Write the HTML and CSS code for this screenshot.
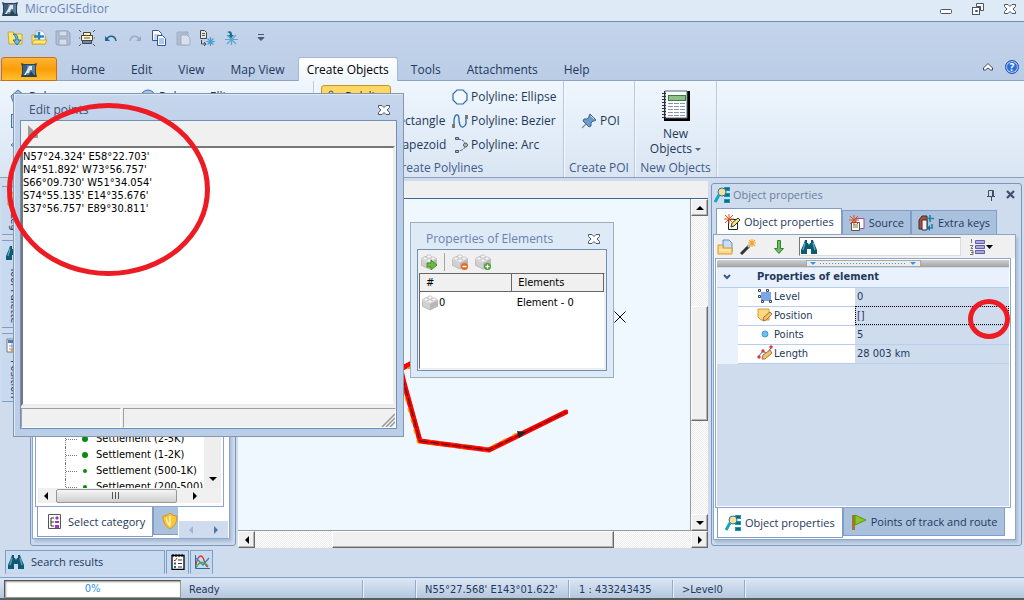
FILE: index.html
```html
<!DOCTYPE html>
<html lang="en">
<head>
<meta charset="utf-8">
<title>MicroGISEditor</title>
<link rel="stylesheet" href="styles.css">
</head>
<body>
<svg class="symbols" aria-hidden="true">
  <symbol id="logo" viewBox="0 0 16 16"><path d="M0 1l3 1 10 0 3-1-1 4 0 6 1 4H0l1-4V5z" fill="#2b4357"/><path d="M2 3h12v10H2z" fill="#5d7f9a"/><path d="M2 3h4v10H2z" fill="#3f6079"/><path d="M8 4h3v4H9l-1 3H6l-1 2H3l3-5z" fill="#dce9f0"/><path d="M10 9l3 4H8z" fill="#25435c"/></symbol>
  <symbol id="bino" viewBox="0 0 16 14"><path d="M4 0h2v3h1l1 2 1-2h1V0h2l1 3 3 7v4h-6V9H6v5H0v-4l3-7z" fill="#0d5a72"/><path d="M4 3L2 10M12 3l2 7" stroke="#5fa9bb" stroke-width="1.3"/></symbol>
  <symbol id="brick" viewBox="0 0 16 16"><path d="M0 5l6-3 10 3v6l-8 4-8-4z" fill="#d0d0d0" stroke="#a8a8a8" stroke-width=".7"/><path d="M0 5l8 4 8-4-9-3z" fill="#f2f2f2"/><path d="M8 9v6l8-4V5z" fill="#b8b8b8"/><g fill="#fafafa" stroke="#aaa" stroke-width=".6"><ellipse cx="8" cy="2.5" rx="2.2" ry="1.6"/><ellipse cx="4" cy="4.5" rx="2.2" ry="1.6"/><ellipse cx="12" cy="4.5" rx="2.2" ry="1.6"/><ellipse cx="8" cy="6.6" rx="2.2" ry="1.6"/></g></symbol>
  <symbol id="close" viewBox="0 0 12 10"><path d="M.5.5h3.500L6 2.500 8 .5h3.500v2L9 5l2.500 2.500v2H8l-2-2-2 2H.5v-2L3 5 .5 2.500z" fill="#fff" stroke="#4c5566"/></symbol>
  <symbol id="objprop" viewBox="0 0 16 16"><path d="M10 0h6v4h-6zM10 6h6v4h-6zM10 12h6v4h-6z" fill="#159ab5"/><path d="M11 2h4M11 8h4M11 14h4" stroke="#083d55"/><circle cx="8" cy="5" r="4" fill="#f5dfa0" stroke="#27758c"/><path d="M5 8l-4 7" stroke="#13a7c4" stroke-width="3"/></symbol>
  <symbol id="spark" viewBox="0 0 16 16"><path d="M5 0v10M0 5h10M1 1l8 8M9 1L1 9" stroke="#e0501c" stroke-width="1"/></symbol>
</svg>

<header class="titlebar">
  <svg class="i16"><use href="#logo"/></svg>
  <h1>MicroGISEditor</h1>
  <div class="winbtns">
    <button aria-label="Minimize"><svg width="12" height="12"><rect x=".5" y="6.500" width="11" height="4" rx="1" fill="#fff" stroke="#4c5566"/></svg></button>
    <button aria-label="Restore"><svg width="12" height="12"><path d="M4.500.5h7v7h-3v-4h-4z" fill="#fff" stroke="#4c5566"/><rect x=".5" y="4.500" width="7" height="7" fill="#fff" stroke="#4c5566"/><path d="M3.500 7.500h2v1h-2zM7.500 3.500h1" fill="none" stroke="#4c5566"/></svg></button>
    <button aria-label="Close"><svg width="12" height="10"><use href="#close"/></svg></button>
  </div>
</header>

<div class="topzone">
  <div class="quick">
    <button aria-label="Open"><svg class="i16" viewBox="0 0 16 16"><path d="M1 2h5l1 2h8v10H2z" fill="#fbe67a" stroke="#d3a721"/><path d="M6 4c4 0 5 2 5 6h3l-4 5-4-5h3c0-3-1-4-3-6z" fill="#66b9e8" stroke="#17638f" stroke-width=".8"/></svg></button>
    <button aria-label="New map"><svg class="i16" viewBox="0 0 16 16"><path d="M1 14V5h4l1 2h9l-1 7z" fill="#fbe67a" stroke="#d3a721"/><path d="M5 1h6l3 3v8H5z" fill="#fff" stroke="#a8a8a8" stroke-width=".8"/><path d="M8 2v9M3 6.500h10" stroke="#2386c3" stroke-width="2.500"/><path d="M1 14l2-4h13l-2 4z" fill="#ffe987" stroke="#d3a721"/></svg></button>
    <button aria-label="Save" disabled><svg class="i16" viewBox="0 0 16 16"><path d="M1 1h12l2 2v12H2l-1-1z" fill="#b2bfd2" stroke="#98a6bb"/><path d="M4 1h8v5H4zM4 9h8v6H4z" fill="#d5ddea" stroke="#98a6bb"/></svg></button>
    <button aria-label="Map snapshot"><svg class="i16" viewBox="0 0 16 16"><path d="M4.500 2.500h7v4h-7z" fill="#fff3a8" stroke="#444"/><path d="M2.500 5.500h11v5h-11z" fill="#fff6c0" stroke="#444"/><path d="M5 8h6" stroke="#555"/><path d="M3.500 10.500h9v3h-9z" fill="#6889b5" stroke="#444"/><path d="M0 0l2 2M16 0l-2 2M0 16l2-2M16 16l-2-2M0 8h1M15 8h1" stroke="#555"/></svg></button>
    <button aria-label="Undo"><svg class="i16" viewBox="0 0 16 16"><path d="M4 9c2-4 8-4 9 2" fill="none" stroke="#1d6690" stroke-width="1.500"/><path d="M2 6v5h5z" fill="#1d6690"/></svg></button>
    <button aria-label="Redo" disabled><svg class="i16" viewBox="0 0 16 16"><path d="M12 9C10 5 4 5 3 11" fill="none" stroke="#9aabc2" stroke-width="1.500"/><path d="M14 6v5H9z" fill="#9aabc2"/></svg></button>
    <button aria-label="Copy"><svg class="i16" viewBox="0 0 16 16"><path d="M1.500.5h6l3 3v7h-9z" fill="#fff" stroke="#35569a"/><path d="M3 5h5M3 7h5M3 9h5" stroke="#8fb3e5"/><path d="M6.500 5.500h5l3 3v7h-8z" fill="#fff" stroke="#35569a"/><path d="M8 9h5M8 11h5M8 13h5" stroke="#5f92dc"/></svg></button>
    <button aria-label="Paste" disabled><svg class="i16" viewBox="0 0 16 16"><path d="M2 2h11v13H2z" fill="#aebbd0" stroke="#9fafc5"/><path d="M6 5h6l3 3v7H6z" fill="#d8e0ec" stroke="#9fafc5"/></svg></button>
    <button aria-label="Import points"><svg class="i16" viewBox="0 0 16 16"><path d="M1.500.5h4l2 2v6h-6z" fill="#e8e8e8" stroke="#444"/><path d="M3 3.500h3M3 5.500h3" stroke="#555"/><path d="M2.500 10v4h4M5 12l2 2-2 2" fill="none" stroke="#444"/><path d="M11.500 7v9M7 11.500h9M8.500 8.500l6 6M14.500 8.500l-6 6" stroke="#4d9fce" stroke-width="1.200"/></svg></button>
    <button aria-label="Center"><svg class="i16" viewBox="0 0 16 16"><path d="M8.500 7v8M2 9.500h13M4 5l9 9M13 5l-9 9" stroke="#5fa5cc" stroke-width="1.200"/><path d="M4 2c4-2 5 0 5 3h2L8 8 5 5h2c0-2-1-2-3-3z" fill="#176f8b"/></svg></button>
    <button aria-label="Customize toolbar"><svg class="i16" viewBox="0 0 16 16"><path d="M5 4.500h6M5 7.500h6l-3 3z" fill="#50586a" stroke="#50586a"/></svg></button>
  </div>
  <nav class="tabs">
    <button class="app" aria-label="Application menu"><svg class="i16"><use href="#logo"/></svg></button>
    <button>Home</button><button>Edit</button><button>View</button><button>Map View</button><button class="on">Create Objects</button><button>Tools</button><button>Attachments</button><button>Help</button>
    <span class="fill"></span>
    <button class="ic" aria-label="Collapse ribbon"><svg width="10" height="8"><path d="M.5 5L5 .5 9.500 5v2h-2L5 5 2.500 7h-2z" fill="#fff" stroke="#3e4655"/></svg></button>
    <button class="ic help" aria-label="Help contents">?</button>
  </nav>
</div>

<section class="ribbon">
  <div class="group polygons">
    <div class="cells">
      <button><svg class="i16" viewBox="0 0 16 16"><path d="M8 1l7 6-3 8H4L1 7z" fill="#9fc4e6" stroke="#3d74ad"/></svg>Polygon</button>
      <button><svg class="i16" viewBox="0 0 16 16"><circle cx="8" cy="8" r="7" fill="#9fc4e6" stroke="#3d74ad"/></svg>Polygon: Ellipse</button>
      <button aria-label="Polygon: Rectangle"><svg class="i16" viewBox="0 0 16 16"><rect x="1.500" y="1.500" width="13" height="13" fill="#c9def2" stroke="#3d74ad"/></svg></button>
      <span></span>
      <button aria-label="Polygon: Rhombus"><svg class="i16" viewBox="0 0 16 16"><path d="M1 8l7-5 7 5-7 5z" fill="#c9def2" stroke="#3d74ad"/></svg></button>
    </div>
  </div>
  <div class="group lines">
    <div class="cells">
      <button class="pressed"><svg class="i16" viewBox="0 0 16 16"><path d="M4 5l4 8 7-5" fill="none" stroke="#3d74ad"/><circle cx="5" cy="4" r="2" fill="#ccc" stroke="#555"/></svg>Polyline</button>
      <button><svg class="i16" viewBox="0 0 16 16"><path d="M5 1h6l4 4v6l-4 4H5l-4-4V5z" fill="#f1f8ff" stroke="#2f68ac" stroke-width="1.200"/></svg>Polyline: Ellipse</button>
      <button class="plain">Polyline: Rectangle</button>
      <button><svg class="i16" viewBox="0 0 16 16"><path d="M2 13V9C2 0 7 0 7 6s3 12 7 5V4" fill="none" stroke="#2f68ac" stroke-width="1.300"/><path d="M0 11h3v4H0zM13 2h3v4h-3z" fill="#777"/></svg>Polyline: Bezier</button>
      <button class="plain">Polyline: Trapezoid</button>
      <button><svg class="i16" viewBox="0 0 16 16"><path d="M6 2c10 1 10 11 0 12" fill="none" stroke="#2f68ac" stroke-dasharray="3 1"/><g fill="#bbb" stroke="#555"><path d="M3.500.5h3v2h-3zM3.500 13.500h3v2h-3z"/><circle cx="13.500" cy="8" r="2"/></g></svg>Polyline: Arc</button>
    </div>
    <h2>Create Polylines</h2>
  </div>
  <div class="group poi">
    <div class="cells"><button><svg class="i16" viewBox="0 0 16 16"><path d="M6 10l-5 5" stroke="#8b98a5" stroke-width="1.500"/><path d="M9 1l6 6-2 1-1 0-2 2 0 3-2 1-6-6 1-2h3l2-2V3z" fill="#6b9cc9" stroke="#3b648c"/><path d="M10 3l3 3" stroke="#cfe5f7"/></svg>POI</button></div>
    <h2>Create POI</h2>
  </div>
  <div class="group objects">
    <button class="big"><svg width="30" height="32" viewBox="0 0 30 32"><path d="M3 1h26v30H3z" fill="#000"/><path d="M4 1h22v27H4z" fill="#fff" stroke="#567"/><path d="M1 3.500h4M1 6.500h4M1 9.500h4M1 12.500h4M1 15.500h4M1 18.500h4M1 21.500h4M1 24.500h4M1 27.500h4" stroke="#333"/><rect x="7.500" y="5.500" width="17" height="5" fill="#8fc08c" stroke="#35803b"/><path d="M7 13.500h17M7 16.500h17M7 19.500h17M7 22.500h17M7 25.500h17" stroke="#8594b0" stroke-dasharray="5 1"/></svg>
      <span>New<br>Objects <i class="caret"></i></span></button>
    <h2>New Objects</h2>
  </div>
</section>

<main class="work">
  <aside class="dock">
    <button class="d1"><svg class="i16" viewBox="0 0 16 16"><path d="M2 2h12v12H2z" fill="#ffe45c" stroke="#b89318"/></svg>Leg</button>
    <button class="d2"><svg class="i16"><use href="#bino"/></svg>Tool Palette</button>
    <button class="d3"><svg class="i16" viewBox="0 0 16 16"><path d="M1 1h13v13H1z" fill="#fff" stroke="#777"/><path d="M2 2h12v3H2z" fill="#487dc1"/><path d="M3 8h9M3 11h9M6 5v9" stroke="#8595a8"/><path d="M4 13l5-3v6z" fill="#e89b3d"/></svg>Position</button>
  </aside>

  <section class="panel left">
    <div class="sheet">
      <div class="treebox">
        <ul class="tree">
          <li><b class="dot"></b>Settlement (2-5K)</li>
          <li><b class="dot"></b>Settlement (1-2K)</li>
          <li><b class="dot s"></b>Settlement (500-1K)</li>
          <li><b class="dot s"></b>Settlement (200-500)</li>
        </ul>
        <div class="vsoft"><i class="tri down"></i></div>
        <div class="hsoft"><i class="tri lft"></i><b class="thumb"></b><i class="tri rgt"></i></div>
      </div>
      <div class="btabs">
        <button class="on"><svg width="14" height="16" viewBox="0 0 14 16"><path d="M.5.5h12v14H.5z" fill="#fff" stroke="#555"/><path d="M6 4H3v8h3M3 8h3" fill="none" stroke="#333"/><path d="M9 2l2 2-2 2-2-2zM7 7h4v2H7zM7 11h4v3H7z" fill="#a235b8"/></svg>Select category</button>
        <button class="shield" aria-label="Protection"><svg class="i16" viewBox="0 0 16 16"><path d="M1 3c3 0 5-1 7-3 2 2 4 3 7 3 0 6-2 10-7 13C3 13 1 9 1 3z" fill="#f6c63b" stroke="#d6941d"/><path d="M8 3v10M4 5c1 4 2 6 4 8" stroke="#fff2b0" stroke-width="1.500" fill="none"/></svg></button>
        <span class="arrows"><i class="tri lft"></i><i class="tri rgt"></i></span>
      </div>
    </div>
  </section>

  <section class="map">
    <div class="ruler"></div>
    <div class="canvas">
      <svg class="route" width="330" height="260" viewBox="238 200 330 260"><g fill="none" stroke-linejoin="round" stroke-linecap="round"><path d="M380 380L412 363M395 345l9 38 16 58 69 9 77-38" stroke="#f00" stroke-width="5"/><path d="M380 382L412 365M394 345l9 38 16 58 69 9 33-17" stroke="#f49a00" stroke-width="5" stroke-dasharray="2 9"/><path d="M380 380L412 363M395 345l9 38 16 58 69 9 77-38" stroke="#f00" stroke-width="4"/><path d="M395 345l9 38 16 58 69 9 77-38" stroke="#222" stroke-dasharray="8 3"/></g><path d="M517 431l9 1-7 6z" fill="#222"/></svg>
      <svg class="cross" width="12" height="12"><path d="M.5.5l11 11M11.500.5l-11 11" stroke="#000"/></svg>
    </div>
    <div class="vbar"><button aria-label="Scroll up"><i class="tri up"></i></button><b></b><button aria-label="Scroll down"><i class="tri down"></i></button></div>
    <div class="hbar"><button aria-label="Scroll left"><i class="tri lft"></i></button><b></b><button aria-label="Scroll right"><i class="tri rgt"></i></button></div>
  </section>

  <section class="panel right">
    <div class="phead"><svg class="i16"><use href="#objprop"/></svg><span>Object properties</span>
      <button aria-label="Pin"><svg width="8" height="11"><path d="M1.500 6V.5h5V6M0 6.500h8M4.500 7v4M5.500 1v5" fill="none" stroke="#3e4e6b"/></svg></button>
      <button aria-label="Close panel"><svg width="10" height="10"><path d="M1 1l7 7M8 1L1 8" stroke="#3e4e6b" stroke-width="2.200"/></svg></button></div>
    <div class="ttabs">
      <button class="on"><svg class="i16" viewBox="0 0 16 16"><path d="M4.500 5.500h9v10h-9z" fill="#fff" stroke="#222"/><path d="M7 13l1-4 6-5 2 2-6 6z" fill="#ffe36a" stroke="#333"/><use href="#spark"/></svg>Object properties</button>
      <button><svg class="i16" viewBox="0 0 16 16"><path d="M7 3.500h8v10H7z" fill="#fff" stroke="#a34ba3"/><path d="M2.500 7.500h8v8h-8z" fill="#fffbe0" stroke="#555"/><path d="M4 10h5M4 12h5" stroke="#777"/><use href="#spark"/></svg>Source</button>
      <button><svg class="i16" viewBox="0 0 16 16"><path d="M1 5l3-4h5v13H1z" fill="#b64a42" stroke="#333"/><path d="M4 5h5v10H4z" fill="#f2f2f2" stroke="#333"/><path d="M12 0v7M9 3.500h7M14 9v4h-4" stroke="#1b89a5" stroke-width="1.600" fill="none"/><path d="M9 13l3-3v6z" fill="#1b6ca5"/></svg>Extra keys</button>
    </div>
    <div class="sheet">
      <div class="tools">
        <button aria-label="Open folder"><svg class="i16" viewBox="0 0 16 16"><path d="M6 1h6l3 3v9H6z" fill="#c9ddf5" stroke="#5f8ec9"/><path d="M1 6h5v3h9v6H1z" fill="#fcd98a" stroke="#d7982f"/><path d="M2 11h12" stroke="#fff3cf"/></svg></button>
        <button aria-label="Wizard"><svg class="i16" viewBox="0 0 16 16"><path d="M1 15l8-8" stroke="#333" stroke-width="3"/><path d="M8 8l2-2" stroke="#bbb" stroke-width="3"/><path d="M12 0v8M8 4h8M9 1l6 6M15 1L9 7" stroke="#f0a92c" stroke-width="1.200"/></svg></button>
        <i class="sep"></i>
        <button class="nar" aria-label="Move down"><svg width="10" height="14"><path d="M3.500.5h3v8h3L5 13.500.5 8.500h3z" fill="#6bbd60" stroke="#378332"/></svg></button>
        <i class="sep"></i>
        <label class="find"><svg class="i16"><use href="#bino"/></svg><input type="text" aria-label="Search properties"></label>
        <i class="sep"></i>
        <button class="sort" aria-label="Sort"><svg width="24" height="16"><g fill="#aaa8de" stroke="#625fa9"><path d="M5.500 1.500h9v3h-9zM5.500 6.500h9v3h-9zM5.500 11.500h9v3h-9z"/></g><path d="M1.500 0v4M0 6.500h3l-2 3h2M0 11.500h3v4H0M1 13.500h2" fill="none" stroke="#555" stroke-width=".8"/><path d="M16 6h7l-3.500 4z" fill="#000"/></svg></button>
      </div>
      <div class="gridframe">
        <div class="split"><span><i class="tri down"></i><i class="dots"></i><i class="tri down"></i></span></div>
        <table class="props">
          <colgroup><col class="k0"><col class="k1"><col></colgroup>
          <thead><tr><th><svg width="8" height="6"><path d="M1 1l3 3 3-3" fill="none" stroke="#3d5a8a" stroke-width="2"/></svg></th><th colspan="2">Properties of element</th></tr></thead>
          <tbody>
          <tr><td></td><th><svg class="i16" viewBox="0 0 16 16"><path d="M4 4h10v9H4z" fill="#7aa5e8"/><g fill="#fff" stroke="#345"><path d="M1.500 1.500h2v2h-2zM9.500 1.500h2v2h-2zM1.500 7.500h2v2h-2zM4.500 12.500h2v2h-2zM12.500 12.500h2v2h-2z"/></g></svg>Level</th><td>0</td></tr>
          <tr class="sel"><td></td><th><svg class="i16" viewBox="0 0 16 16"><path d="M1 2h11v11H4l-3-3z" fill="#ffd77d" stroke="#d89b3a"/><path d="M6 14l1-4 6-5 2 2-6 6z" fill="#f8c56c" stroke="#a8703a"/></svg>Position</th><td>[]<i class="ring"></i></td></tr>
          <tr><td></td><th><svg class="i16" viewBox="0 0 16 16"><circle cx="8" cy="8" r="3" fill="#6cc0ee" stroke="#3c98cf"/></svg>Points</th><td>5</td></tr>
          <tr><td></td><th><svg class="i16" viewBox="0 0 16 16"><path d="M1 12l5-6 4 3 5-8" fill="none" stroke="#3e62c5"/><g fill="#e33"><circle cx="2" cy="12" r="1.700"/><circle cx="6" cy="6" r="1.700"/><circle cx="14" cy="2" r="1.700"/></g><path d="M5 14l1-4 7-5 2 3-7 6z" fill="#f5c36c" stroke="#a8703a"/></svg>Length</th><td>28 003 km</td></tr>
          </tbody>
        </table>
      </div>
      <div class="btabs">
        <button class="on"><svg class="i16"><use href="#objprop"/></svg>Object properties</button>
        <button><svg class="i16" viewBox="0 0 16 16"><path d="M2.500 1v15" stroke="#a87431" stroke-width="3"/><path d="M4 1l11 5-11 5z" fill="#8cc820" stroke="#5c9312"/></svg>Points of track and route</button>
      </div>
    </div>
  </section>
</main>

<div class="bottomdock">
  <button class="sr"><svg class="i16" viewBox="0 0 16 16"><use href="#bino"/></svg>Search results</button>
  <button class="sq" aria-label="Task list"><svg class="i16" viewBox="0 0 16 16"><path d="M2 1.500h12v14H2z" fill="#fff" stroke="#000" stroke-width="1.300"/><path d="M3 0v3M6 0v3M9 0v3M12 0v3" stroke="#000"/><path d="M4 6l1 1 2-3" stroke="#e22" fill="none"/><path d="M4 8.500h2v2H4zM4 12h2v2H4z" fill="#178"/><path d="M8 6h4M8 9.500h4M8 13h4" stroke="#333"/></svg></button>
  <button class="sq" aria-label="Chart"><svg class="i16" viewBox="0 0 16 16"><path d="M1.500 1v13.500H16" fill="none" stroke="#369"/><path d="M2 11C4 0 8 0 10 6s2 6 4 7" fill="none" stroke="#d33" stroke-width="1.300"/><path d="M2 4l7 7 6-7" fill="none" stroke="#38b" stroke-width="1.300"/><path d="M2 14c3-7 8-7 12-2" fill="none" stroke="#4a4" stroke-width="1.300"/></svg></button>
</div>

<footer class="status">
  <div class="progress" role="progressbar" aria-valuenow="0">0%</div>
  <span class="c1">Ready</span><span class="c0"></span><span class="c2">N55°27.568' E143°01.622'</span><span class="c3">1 : 433243435</span><span class="c4">&gt;Level0</span>
</footer>

<section class="dialog elements">
  <header><h2>Properties of Elements</h2><button aria-label="Close elements"><svg width="12" height="10"><use href="#close"/></svg></button></header>
  <div class="body">
    <div class="bar">
      <button aria-label="Go to element"><svg class="i16" viewBox="0 0 16 16"><use href="#brick"/><path d="M6 9h4V6l6 5-6 5v-3H6z" fill="#6cbc3c" stroke="#33801c" stroke-width=".8"/></svg></button>
      <i class="sep"></i>
      <button aria-label="Remove element"><svg class="i16" viewBox="0 0 16 16"><use href="#brick"/><circle cx="12.500" cy="12.500" r="3.500" fill="#e8691d"/><path d="M10.500 12.500h4" stroke="#fff" stroke-width="1.500"/></svg></button>
      <button aria-label="Add element"><svg class="i16" viewBox="0 0 16 16"><use href="#brick"/><circle cx="12.500" cy="12.500" r="3.500" fill="#4b9c34"/><path d="M10.500 12.500h4M12.500 10.500v4" stroke="#fff" stroke-width="1.300"/></svg></button>
    </div>
    <div class="list"><table>
      <thead><tr><th>#</th><th>Elements</th></tr></thead>
      <tbody><tr><td><svg class="i16"><use href="#brick"/></svg>0</td><td>Element - 0</td></tr></tbody>
    </table></div>
  </div>
</section>

<section class="dialog points">
  <header><h2>Edit points</h2><button aria-label="Close points"><svg width="12" height="10"><use href="#close"/></svg></button></header>
  <div class="body">
    <div class="bar"><svg width="12" height="13"><path d="M1 0l10 10v3H1z" fill="#9c9c9c"/></svg></div>
    <textarea aria-label="Points" spellcheck="false">N57°24.324' E58°22.703'
N4°51.892' W73°56.757'
S66°09.730' W51°34.054'
S74°55.135' E14°35.676'
S37°56.757' E89°30.811'</textarea>
    <div class="sbar"><span></span><span></span><svg width="14" height="14"><path d="M1 14L14 1M5 14l9-9M9 14l5-5" stroke="#999" stroke-width="1.500"/></svg></div>
  </div>
  <i class="ring"></i>
</section>
</body>
</html>
```
FILE: styles.css
```css
* { box-sizing: border-box; }
body {
  margin: 0; min-height: 100vh; display: flex; flex-direction: column; position: relative;
  background: #cfdcee; color: #1e395b; overflow: hidden;
  font: 12px/16px "Open Sans", "Noto Sans", sans-serif;
  border-bottom: 2px solid #56605a;
}
button { font: inherit; color: inherit; background: none; border: 0; padding: 0; margin: 0; display: inline-flex; align-items: center; white-space: nowrap; }
h1, h2 { font: inherit; margin: 0; }
svg { flex: none; display: block; }
i { font-style: normal; }
.symbols { position: absolute; width: 0; height: 0; }
.i16 { width: 16px; height: 16px; }

.titlebar { height: 21px; display: flex; align-items: center; gap: 7px; padding: 0 8px 3px 2px; background: #deeaf6; color: #6c81b4; }
.winbtns { margin-left: auto; display: flex; gap: 20px; }
.topzone { height: 60px; border-top: 1px solid #6d8cb1; background: linear-gradient(#c3d4eb, #bbcde6); display: flex; flex-direction: column; justify-content: space-between; }
.quick { display: flex; gap: 8px; padding: 8px 7px; }
.quick button:last-child { margin-left: 6px; }
.tabs { display: flex; align-items: stretch; height: 24px; padding: 0 5px 0 1px; border-bottom: 1px solid #8ea4c4; }
.tabs button { padding: 2px 13px 0; height: 24px; margin-bottom: -1px; justify-content: center; }
.tabs .app { width: 56px; margin-right: 1px; border: 1px solid #d26b16; border-radius: 3px 3px 0 0; background: linear-gradient(#ffb637, #fb9d09 50%, #ffc02e); }
.tabs .on { color: #000; background: linear-gradient(#fff, #eef6fe); border: 1px solid #a5b7d1; border-bottom: 0; border-radius: 3px 3px 0 0; padding: 1px 8px 0; }
.tabs .fill { flex: 1; }
.tabs .ic { padding: 0; align-self: center; margin: 0 0 4px; height: 14px; }
.tabs .help { margin-left: 12px; width: 14px; border-radius: 50%; background: #2f6ed8; box-shadow: inset 0 0 0 1px #b9d6fa; border: 1px solid #2457b0; color: #fff; font-size: 10px; font-weight: 700; line-height: 12px; }

.ribbon { height: 97px; display: flex; background: linear-gradient(#eff6fd, #e4eef9 50%, #d9e5f2); border-bottom: 1px solid #8ba0bc; }
.group { display: flex; flex-direction: column; border-right: 1px solid #b9c9dc; box-shadow: 1px 0 #f4f9ff; }
.group h2 { margin-top: auto; padding-bottom: 1px; text-align: center; color: #43598a; }
.cells { display: grid; grid-auto-rows: 24px; padding-top: 4px; }
.cells button { gap: 3px; }
.polygons { width: 314px; }
.polygons .cells { grid-template-columns: 130px 1fr; padding-left: 10px; }
.lines { width: 250px; }
.lines .cells { grid-template-columns: 131px 1fr; padding-left: 7px; }
.lines .pressed { width: 70px; padding-left: 4px; border: 1px solid #c2922b; border-radius: 3px; background: #ffd864; }
.lines .plain { padding-left: 20px; }
.poi { width: 71px; }
.poi .cells { padding: 28px 0 0 17px; }
.objects { width: 82px; }
.big { flex-direction: column; gap: 4px; padding-top: 9px; line-height: 15px; }
.caret { display: inline-block; border: 3px solid transparent; border-top-color: #56657e; border-bottom: 0; vertical-align: 2px; }

.work { flex: 1; display: flex; min-height: 0; }
.dock { width: 26px; padding: 8px 0 0 2px; display: flex; flex-direction: column; gap: 5px; }
.dock button { writing-mode: vertical-rl; width: 24px; gap: 6px; padding: 4px 3px; justify-content: flex-start; font: 11px/16px "DejaVu Sans Condensed", sans-serif; background: #c8daf0; border: solid #7f9dca; border-width: 1px 0; }
.dock .d1 { height: 49px; }
.dock .d2 { height: 88px; }
.dock .d3 { height: 69px; }

.panel { display: flex; flex-direction: column; border: 1px solid #7c97bd; border-radius: 3px; font-size: 11px; }
.sheet { flex: 1; display: flex; flex-direction: column; min-height: 0; background: #fff; border: 1px solid #8ba6cb; box-shadow: 2px 3px 3px #a9bcd6; }
.left { width: 206px; margin: 5px 0 2px 4px; padding: 0 5px 6px 1px; }
.left .sheet { padding: 0 5px 0 2px; }
.treebox { flex: 1; min-height: 0; display: grid; grid-template: 1fr 15px / 1fr 17px; border: 1px solid #8ba6cb; padding: 0 2px 3px 2px; font: 11px/16px "DejaVu Sans Condensed", sans-serif; color: #000; overflow: hidden; }
.tree { list-style: none; margin: 0; padding: 0 0 0 27px; display: flex; flex-direction: column; justify-content: flex-end; overflow: hidden; margin-bottom: -7px; clip-path: inset(0 0 7px 0); }
.tree li { height: 16px; display: flex; align-items: center; border-left: 1px dotted #777; white-space: nowrap; }
.tree li::before { content: ""; width: 11px; border-top: 1px dotted #777; }
.dot { flex: none; width: 6px; height: 6px; border-radius: 50%; background: #0a8a0a; margin: 0 8px 0 5px; }
.dot.s { width: 4px; height: 4px; margin: 0 9px 0 6px; }
.vsoft { background: #eee; display: flex; align-items: flex-end; justify-content: center; padding-bottom: 7px; }
.hsoft { grid-column: 1 / 3; background: #f0f0f0; display: flex; align-items: center; gap: 8px; padding: 0 24px 0 6px; }
.thumb { flex: 1; height: 14px; border: 1px solid #979797; border-radius: 2px; background: repeating-linear-gradient(90deg, #555 0 1px, transparent 1px 3px) center / 9px 7px no-repeat, linear-gradient(#f5f5f5, #d0d0d0); }
.tri { display: inline-block; width: 0; height: 0; border: 4px solid transparent; }
.tri.up { border-bottom-color: #000; border-top: 0; }
.tri.down { border-top-color: #000; border-bottom: 0; }
.tri.lft { border-right-color: #000; border-left: 0; }
.tri.rgt { border-left-color: #000; border-right: 0; }
.hsoft .rgt { margin-left: 8px; }
.btabs { display: flex; align-items: flex-start; height: 31px; padding-left: 2px; }
.btabs button { height: 28px; padding: 0 7px; gap: 4px; background: #aac1de; border: 1px solid #7f9dc6; border-top: 0; }
.btabs .on { height: 30px; background: #fff; }
.left .btabs .on { padding: 0 7px 0 10px; gap: 6px; }
.left .btabs .shield { padding: 0 0 0 8px; width: 25px; border-right: 0; }
.arrows { flex: 1; align-self: flex-end; height: 17px; margin: 0 -4px 0 1px; background: #cfdcee; display: flex; align-items: center; justify-content: space-around; }
.arrows .lft { border-right-color: #9fb4d2; }
.arrows .rgt { border-left-color: #5474a5; }

.map { flex: 1; margin: 3px 0 0 2px; min-width: 0; display: grid; grid-template: 18px 1fr 17px / 1fr 17px; }
.ruler { grid-column: 1 / 3; background: #f0f0f0; border-bottom: 1px solid #38679b; }
.canvas { position: relative; overflow: hidden; background: #eff7ff; border: solid #999; border-width: 0 1px 1px 0; }
.route { position: absolute; left: 0; top: 1px; }
.cross { position: absolute; left: 376px; top: 112px; }
.vbar, .hbar { display: flex; background: repeating-conic-gradient(#fff 0 25%, #ebebeb 0 50%) 0 0 / 2px 2px; }
.vbar { flex-direction: column; }
.hbar { grid-column: 1 / 3; }
.vbar button, .hbar button, .vbar b, .hbar b { background: #f0f0f0; border: 1px solid; border-color: #fff #696969 #696969 #fff; box-shadow: inset -1px -1px #b5b5b5; }
.vbar button, .hbar button { width: 17px; height: 17px; justify-content: center; }
.vbar b { height: 115px; margin: 90px 0 auto; }
.hbar b { width: 282px; margin: 0 auto 0 77px; }

.right { width: 311px; margin: 5px 2px 2px 3px; padding: 0 5px 5px 1px; }
.phead { height: 24px; display: flex; align-items: center; padding: 0 0 2px 1px; gap: 3px; color: #6a7f9f; }
.phead button { margin-left: 8px; }
.phead span { flex: 1; }
.ttabs { display: flex; align-items: flex-end; padding-left: 3px; }
.ttabs button { height: 24px; padding: 0 6px; gap: 4px; background: #aac1de; border: 1px solid #7f9dc6; border-bottom: 0; }
.ttabs .on { height: 26px; background: #fff; padding: 0 7px; }
.right .sheet { padding: 0 4px 0 1px; }
.tools { height: 23px; margin-right: -4px; display: flex; align-items: center; gap: 7px; padding: 0 30px 0 2px; background: #f0f0f0; }
.sep { width: 1px; height: 18px; background: #a5a5a5; }
.nar { padding: 0 4px; }
.find { flex: 1; height: 19px; display: flex; align-items: center; background: #fff; border: 1px solid; border-color: #777 #ddd #ddd #777; padding-left: 1px; margin-left: -3px; }
.find input { flex: 1; min-width: 0; border: 0; outline: 0; background: none; font: inherit; }
.tools { padding-right: 29px; }
.sort { margin-left: -5px; }
.gridframe { flex: 1; background: #cfdcee; border: 1px solid #8ba6cb; outline: 1px solid #fff; outline-offset: -2px; padding: 1px; }
.split { height: 7px; display: flex; justify-content: center; background: linear-gradient(#cfcfcf, #a3a3a3); margin-bottom: 1px; }
.split span { width: 115px; border: 1px solid #a8a8a8; background: #ededed; display: flex; align-items: center; justify-content: center; gap: 4px; }
.split .tri { border-width: 3px 3px 0; border-top-color: #3096f0; }
.split .dots { width: 86px; height: 1px; background: repeating-linear-gradient(90deg, #3096f0 0 1px, transparent 1px 3px); }
.tools .sort { margin-right: 22px; }
.props { width: 100%; border-collapse: collapse; table-layout: fixed; font: 11px/18px "DejaVu Sans Condensed", sans-serif; }
.props .k0 { width: 21px; }
.props .k1 { width: 117px; }
.props th, .props td { padding: 0 0 0 2px; height: 19px; text-align: left; font-weight: 400; border-bottom: 1px solid #b9cdee; }
.props thead th { background: #e8f1fc; font-weight: 700; padding-left: 19px; }
.props thead th:first-child { padding-left: 6px; }
.props tbody td:first-child { background: #e8f1fc; border-bottom-color: #e8f1fc; }
.props tbody th { background: #fff; padding-left: 19px; }
.props tbody th svg { display: inline-block; vertical-align: -4px; margin-right: 1px; }
.props .sel td:last-child { position: relative; outline: 1px dotted #000; outline-offset: -1px; }
.ring { position: absolute; border: 5px solid #ed1c24; border-radius: 50%; pointer-events: none; }
.sel .ring { width: 42px; height: 40px; right: -1px; top: -8px; }

.bottomdock { height: 29px; display: flex; gap: 1px; padding: 2px 0 3px 5px; font-size: 11px; }
.bottomdock button { border: 1px solid #7f9dca; border-bottom-color: #c4d6ee; background: #c8daf0; gap: 7px; padding: 0 2px; }
.bottomdock .sr { width: 160px; }
.bottomdock .sq { width: 23px; justify-content: center; }
.status { height: 21px; display: flex; align-items: stretch; padding: 2px 0 0 4px; border-top: 1px solid #7f9dc6; background: linear-gradient(#dce7f5, #b5c7de); color: #1e395b; font: 11px/19px "DejaVu Sans Condensed", sans-serif; }
.progress { width: 177px; background: #fff; border: 1px solid; border-color: #555 #999 #999 #555; box-shadow: inset 1px 1px 2px #999; color: #2f8fee; text-align: center; line-height: 16px; }
.status span { border-right: 1px solid #94aac8; box-shadow: 1px 0 #e8f0fa; padding-left: 9px; white-space: nowrap; }
.status .c1 { width: 182px; padding-left: 8px; }
.status .c0 { width: 53px; }
.status .c2 { width: 153px; }
.status .c3 { width: 104px; padding-left: 10px; }
.status .c4 { width: 72px; }

.dialog { position: absolute; display: flex; flex-direction: column; }
.dialog header { display: flex; justify-content: space-between; align-items: center; }
.dialog .body { flex: 1; display: flex; flex-direction: column; background: #f0f0f0; border: 1px solid #6d8fb8; font: 11px/13px "DejaVu Sans Condensed", sans-serif; color: #000; }
.points { left: 13px; top: 93px; width: 391px; height: 344px; padding: 0 6px 7px; border: 1px solid #8596ae; box-shadow: inset 1px 1px #dce9f8; background: linear-gradient(#c5d6ed, #bbcee7 20%); color: #3c5078; }
.points header { height: 26px; padding: 5px 7px 0 9px; }
.points .bar { height: 25px; padding: 4px 0 0 6px; }
.points textarea { flex: 1; resize: none; border: 2px solid; border-color: #777 #eee #eee #777; padding: 2px 0 0; margin: 0 1px 2px 0; font: inherit; background: #fff; color: #000; outline: 0; }
.sbar { display: flex; height: 20px; gap: 2px; position: relative; }
.sbar span { border: 1px solid; border-color: #a0a0a0 #fff #fff #a0a0a0; width: 100px; }
.sbar span + span { flex: 1; }
.sbar svg { position: absolute; right: 1px; bottom: 1px; }
.points .ring { left: -7px; top: 9px; width: 203px; height: 173px; }
.elements { left: 410px; top: 222px; width: 204px; height: 156px; padding: 0 6px 6px; border: 1px solid #9eafc2; background: #deeaf6; color: #6c81b4; }
.elements header { height: 26px; padding: 5px 7px 0 9px; }
.elements .bar { height: 23px; display: flex; align-items: center; gap: 7px; padding-left: 3px; }
.list { flex: 1; background: #fff; border: 1px solid; border-color: #666 #eee #eee #666; margin: 0 1px 1px 1px; }
.list table { width: 100%; border-collapse: collapse; }
.list th { background: #f0f0f0; font-weight: 400; text-align: left; height: 17px; padding: 0 0 0 6px; width: 50%; border-right: 1px solid #666; border-bottom: 1px solid #666; }
.list td { padding: 2px 0 0 5px; height: 20px; }
.list td:first-child { display: flex; align-items: center; gap: 1px; padding-left: 2px; }
```
